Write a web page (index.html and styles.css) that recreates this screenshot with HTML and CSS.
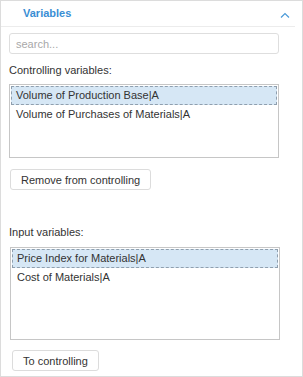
FILE: index.html
```html
<!DOCTYPE html>
<html lang="en">
<head>
    <meta charset="UTF-8">
    <link rel="stylesheet" href="styles.css">
    <title>Variables</title>
</head>
<body>
    <div class="panel">
        <div class="panel-header">
            <span class="panel-title">Variables</span>
            <svg class="chevron" width="10" height="6" viewBox="0 0 10 6">
                <path d="M1 5.5 L5 1.5 L9 5.5" fill="none" stroke="#4a9ad8" stroke-width="1.2"/>
            </svg>
        </div>

        <div class="panel-body">
            <input type="text" class="search" placeholder="search...">

            <div class="label">Controlling variables:</div>
            <div class="list list-controlling">
                <div class="item selected">Volume of Production Base|A</div>
                <div class="item">Volume of Purchases of Materials|A</div>
            </div>
            <button class="btn btn-remove">Remove from controlling</button>

            <div class="label label-input">Input variables:</div>
            <div class="list list-input">
                <div class="item selected">Price Index for Materials|A</div>
                <div class="item">Cost of Materials|A</div>
            </div>
            <button class="btn btn-to">To controlling</button>
        </div>
    </div>
</body>
</html>
```

FILE: styles.css
```css
body {
    margin: 0;
    font-family: "Liberation Sans", Arial, sans-serif;
    font-size: 11px;
    color: #333;
    background-color: #fff;
}

.panel {
    width: 303px;
    height: 377px;
    box-sizing: border-box;
    border: 1px solid #dcdcdc;
}

.panel-header {
    height: 25px;
    margin-right: 7px;
    border-bottom: 1px solid #ececec;
    display: flex;
    align-items: center;
    justify-content: space-between;
    padding: 0 5px 0 22px;
}

.panel-title {
    color: #3a8ed4;
    font-weight: bold;
    font-size: 11px;
    margin-top: -1px;
}

.chevron {
    margin-top: 2px;
}

.panel-body {
    padding: 6px 23px 0 8px;
}

.search {
    display: block;
    width: 100%;
    height: 21px;
    box-sizing: border-box;
    border: 1px solid #dedede;
    border-radius: 3px;
    padding: 0 6px;
    font-family: inherit;
    font-size: 11px;
    color: #333;
    outline: none;
}

.search::placeholder {
    color: #a8a8a8;
}

.label {
    margin-top: 9px;
    line-height: 14px;
}

.label-input {
    margin-top: 35px;
}

.list {
    margin-top: 7px;
    border: 1px solid #c6c6c6;
    padding: 1px;
    box-sizing: border-box;
}

.list-controlling {
    height: 74px;
}

.list-input {
    height: 93px;
    margin-left: 1px;
    margin-right: -1px;
    margin-top: 8px;
}

.item {
    line-height: 17px;
    padding: 0 4px;
    border: 1px solid transparent;
    white-space: nowrap;
}

.item.selected {
    background-color: #d6e7f5;
    border: 1px dashed #8f9fae;
}

.btn {
    display: block;
    height: 21px;
    margin-top: 11px;
    margin-left: 1px;
    padding: 0 10px;
    background-color: #fff;
    border: 1px solid #dcdcdc;
    border-radius: 3px;
    font-family: inherit;
    font-size: 11px;
    color: #333;
}

.btn-to {
    margin-left: 3px;
    margin-top: 10px;
}
```
